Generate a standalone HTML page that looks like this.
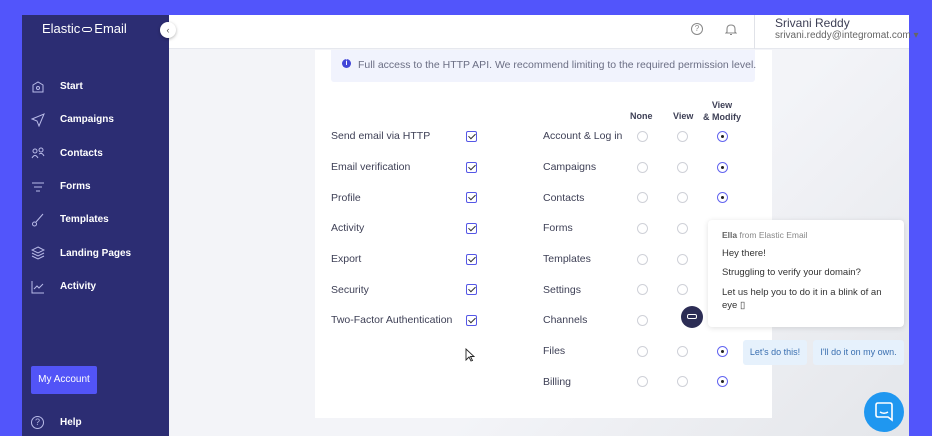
<!DOCTYPE html>
<html><head><meta charset="utf-8"><style>
*{margin:0;padding:0;box-sizing:border-box}
body{width:932px;height:436px;overflow:hidden;background:#5255fb;font-family:"Liberation Sans",sans-serif;position:relative}
.abs{position:absolute}
#side{left:22px;top:15px;width:147px;height:421px;background:#2c2d73}
#main{left:169px;top:15px;width:740px;height:421px;background:linear-gradient(135deg,#f3f4f8 60%,#e4e6ea)}
#hdr{left:169px;top:15px;width:740px;height:34px;background:#fff;border-bottom:1px solid #e6e8ee}
.nav{position:absolute;left:60px;color:#fff;font-size:10px;font-weight:bold}
.ico{position:absolute;left:31px;width:14px;height:14px}
.card{left:315px;top:50px;width:457px;height:368px;background:#fff}
.t{position:absolute;font-size:10.5px;color:#3d3f55}
.cb{position:absolute;left:466px;width:11px;height:11px;border:1.3px solid #5557e6;border-radius:2px}
.cb:after{content:"";position:absolute;left:3px;top:0px;width:3px;height:6px;border-right:1.3px solid #333;border-bottom:1.3px solid #333;transform:rotate(45deg)}
.r{position:absolute;width:11px;height:11px;border:1px solid #cfd1d8;border-radius:50%}
.r.on{border-color:#6264f0}
.r.on:after{content:"";position:absolute;left:3px;top:3px;width:3px;height:3px;border-radius:50%;background:#222}
.h{position:absolute;font-size:9px;font-weight:bold;color:#3d3f55;text-align:center}
</style></head><body>
<div id="side" class="abs"></div>
<div id="main" class="abs"></div>
<div id="hdr" class="abs"></div>
<div class="abs" style="left:754px;top:15px;width:1px;height:34px;background:#e0e2e8"></div>
<div class="abs" style="left:42px;top:21px;color:#fff;font-size:13px">Elastic<span style="display:inline-block;width:10px;height:5px;border:1.3px solid #fff;border-radius:3px;margin:0 2px;vertical-align:middle"></span>Email</div>
<div class="abs" style="left:160px;top:22px;width:16px;height:16px;border-radius:50%;background:#fff;box-shadow:0 1px 3px rgba(0,0,0,.3);font-size:9px;color:#555;text-align:center;line-height:16px">‹</div>
<div class="nav" style="top:81px">Start</div>
<div class="nav" style="top:114px">Campaigns</div>
<div class="nav" style="top:148px">Contacts</div>
<div class="nav" style="top:181px">Forms</div>
<div class="nav" style="top:214px">Templates</div>
<div class="nav" style="top:248px">Landing Pages</div>
<div class="nav" style="top:281px">Activity</div>
<svg class="ico" style="top:80px" viewBox="0 0 14 14" fill="none" stroke="#b9bbe8" stroke-width="1"><path d="M2 5L7 2L12 5V12H2Z"/><circle cx="7" cy="8" r="1.5"/></svg>
<svg class="ico" style="top:113px" viewBox="0 0 14 14" fill="none" stroke="#b9bbe8" stroke-width="1"><path d="M1 6L13 1L8 13L6 8Z"/></svg>
<svg class="ico" style="top:146px" viewBox="0 0 14 14" fill="none" stroke="#b9bbe8" stroke-width="1"><circle cx="4" cy="5" r="2"/><circle cx="10" cy="4" r="2"/><path d="M1 12Q4 7 7 12M8 8Q11 6 13 10"/></svg>
<svg class="ico" style="top:180px" viewBox="0 0 14 14" fill="none" stroke="#b9bbe8" stroke-width="1"><path d="M1 3H13M3 7H11M5 11H9"/></svg>
<svg class="ico" style="top:213px" viewBox="0 0 14 14" fill="none" stroke="#b9bbe8" stroke-width="1"><path d="M12 1L5 9"/><circle cx="3.5" cy="11" r="2"/></svg>
<svg class="ico" style="top:246px" viewBox="0 0 14 14" fill="none" stroke="#b9bbe8" stroke-width="1"><path d="M7 1L13 4L7 7L1 4Z M1 7L7 10L13 7 M1 10L7 13L13 10"/></svg>
<svg class="ico" style="top:280px" viewBox="0 0 14 14" fill="none" stroke="#b9bbe8" stroke-width="1"><path d="M1 1V13H13M3 9L6 6L8 8L12 4"/></svg>
<div class="abs" style="left:31px;top:366px;width:66px;height:28px;background:#5254f7;border-radius:2px;color:#fff;font-size:10px;line-height:28px;text-align:center">My Account</div>
<div class="abs" style="left:31px;top:416px;width:13px;height:13px;border:1px solid #b9bbe8;border-radius:50%;color:#b9bbe8;font-size:9px;text-align:center;line-height:11px">?</div>
<div class="nav" style="top:417px">Help</div>
<div class="abs" style="left:691px;top:23px;width:12px;height:12px;border:1.2px solid #888;border-radius:50%;color:#888;font-size:8px;text-align:center;line-height:10px">?</div>
<svg class="abs" style="left:725px;top:23px" width="12" height="13" viewBox="0 0 12 13" fill="none" stroke="#888" stroke-width="1.1"><path d="M2 9V6Q2 2 6 2Q10 2 10 6V9L11 10H1Z M5 11.5H7"/></svg>
<div class="abs" style="left:775px;top:16px;font-size:12px;color:#3d3f55">Srivani Reddy</div>
<div class="abs" style="left:775px;top:30px;font-size:10px;color:#666">srivani.reddy@integromat.com ▾</div>
<div class="card abs"></div>
<div class="abs" style="left:331px;top:50px;width:424px;height:32px;background:#f1f3fd;border-radius:0 0 3px 3px"></div>
<div class="abs" style="left:342px;top:59px;width:9px;height:9px;border-radius:50%;background:#4246d8;color:#fff;font-size:7px;text-align:center;line-height:9px;font-weight:bold">i</div>
<div class="abs" style="left:358px;top:59px;font-size:10.5px;color:#6b6e84">Full access to the HTTP API. We recommend limiting to the required permission level.</div>
<div class="h" style="left:630px;top:111px">None</div>
<div class="h" style="left:673px;top:111px">View</div>
<div class="h" style="left:703px;top:99px;line-height:12px">View<br>&amp; Modify</div>
<div class="t" style="left:331px;top:130px">Send email via HTTP</div>
<div class="t" style="left:331px;top:161px">Email verification</div>
<div class="t" style="left:331px;top:192px">Profile</div>
<div class="t" style="left:331px;top:222px">Activity</div>
<div class="t" style="left:331px;top:253px">Export</div>
<div class="t" style="left:331px;top:284px">Security</div>
<div class="t" style="left:331px;top:314px">Two-Factor Authentication</div>
<div class="cb" style="top:131px"></div><div class="cb" style="top:162px"></div><div class="cb" style="top:192px"></div><div class="cb" style="top:223px"></div><div class="cb" style="top:254px"></div><div class="cb" style="top:284px"></div><div class="cb" style="top:315px"></div>
<div class="t" style="left:543px;top:130px">Account &amp; Log in</div>
<div class="t" style="left:543px;top:161px">Campaigns</div>
<div class="t" style="left:543px;top:192px">Contacts</div>
<div class="t" style="left:543px;top:222px">Forms</div>
<div class="t" style="left:543px;top:253px">Templates</div>
<div class="t" style="left:543px;top:284px">Settings</div>
<div class="t" style="left:543px;top:314px">Channels</div>
<div class="t" style="left:543px;top:345px">Files</div>
<div class="t" style="left:543px;top:376px">Billing</div>
<div class="r" style="left:637px;top:131px"></div><div class="r" style="left:677px;top:131px"></div><div class="r on" style="left:717px;top:131px"></div>
<div class="r" style="left:637px;top:162px"></div><div class="r" style="left:677px;top:162px"></div><div class="r on" style="left:717px;top:162px"></div>
<div class="r" style="left:637px;top:192px"></div><div class="r" style="left:677px;top:192px"></div><div class="r on" style="left:717px;top:192px"></div>
<div class="r" style="left:637px;top:223px"></div><div class="r" style="left:677px;top:223px"></div>
<div class="r" style="left:637px;top:254px"></div><div class="r" style="left:677px;top:254px"></div>
<div class="r" style="left:637px;top:284px"></div><div class="r" style="left:677px;top:284px"></div>
<div class="r" style="left:637px;top:315px"></div>
<div class="r" style="left:637px;top:346px"></div><div class="r" style="left:677px;top:346px"></div><div class="r on" style="left:717px;top:346px"></div>
<div class="r" style="left:637px;top:376px"></div><div class="r" style="left:677px;top:376px"></div><div class="r on" style="left:717px;top:376px"></div>
<svg class="abs" style="left:465px;top:348px" width="10" height="14" viewBox="0 0 10 14"><path d="M1 1V12L4 9L6 13L7.5 12.5L5.5 8.5H9Z" fill="#fff" stroke="#222" stroke-width="0.9"/></svg>
<div class="abs" style="left:708px;top:220px;width:196px;height:107px;background:#fff;border-radius:4px;box-shadow:0 1px 6px rgba(0,0,0,.12)"></div>
<div class="abs" style="left:722px;top:230px;font-size:8.5px;color:#888"><b style="color:#666">Ella</b> from Elastic Email</div>
<div class="abs" style="left:722px;top:248px;font-size:9.5px;color:#333">Hey there!</div>
<div class="abs" style="left:722px;top:267px;font-size:9.5px;color:#333">Struggling to verify your domain?</div>
<div class="abs" style="left:722px;top:286px;font-size:9.5px;color:#333;line-height:13px;width:170px">Let us help you to do it in a blink of an eye ▯</div>
<div class="abs" style="left:681px;top:306px;width:22px;height:22px;border-radius:50%;background:#2c2d55"><div style="position:absolute;left:6px;top:8px;width:10px;height:5px;border:1.2px solid #fff;border-radius:2px"></div></div>
<div class="abs" style="left:743px;top:340px;width:64px;height:25px;background:#e6f1fc;border-radius:3px;color:#3a6fb0;font-size:9px;line-height:25px;text-align:center">Let's do this!</div>
<div class="abs" style="left:813px;top:340px;width:91px;height:25px;background:#e6f1fc;border-radius:3px;color:#3a6fb0;font-size:9px;line-height:25px;text-align:center">I'll do it on my own.</div>
<div class="abs" style="left:864px;top:392px;width:40px;height:40px;border-radius:50%;background:#1f97f0"><svg style="position:absolute;left:11px;top:10px" width="18" height="20" viewBox="0 0 18 20" fill="none" stroke="#fff" stroke-width="1.6"><path d="M3 1H15Q17 1 17 3V18L13 15H3Q1 15 1 13V3Q1 1 3 1Z"/><path d="M5 10Q9 12.5 13 10"/></svg></div>
</body></html>
